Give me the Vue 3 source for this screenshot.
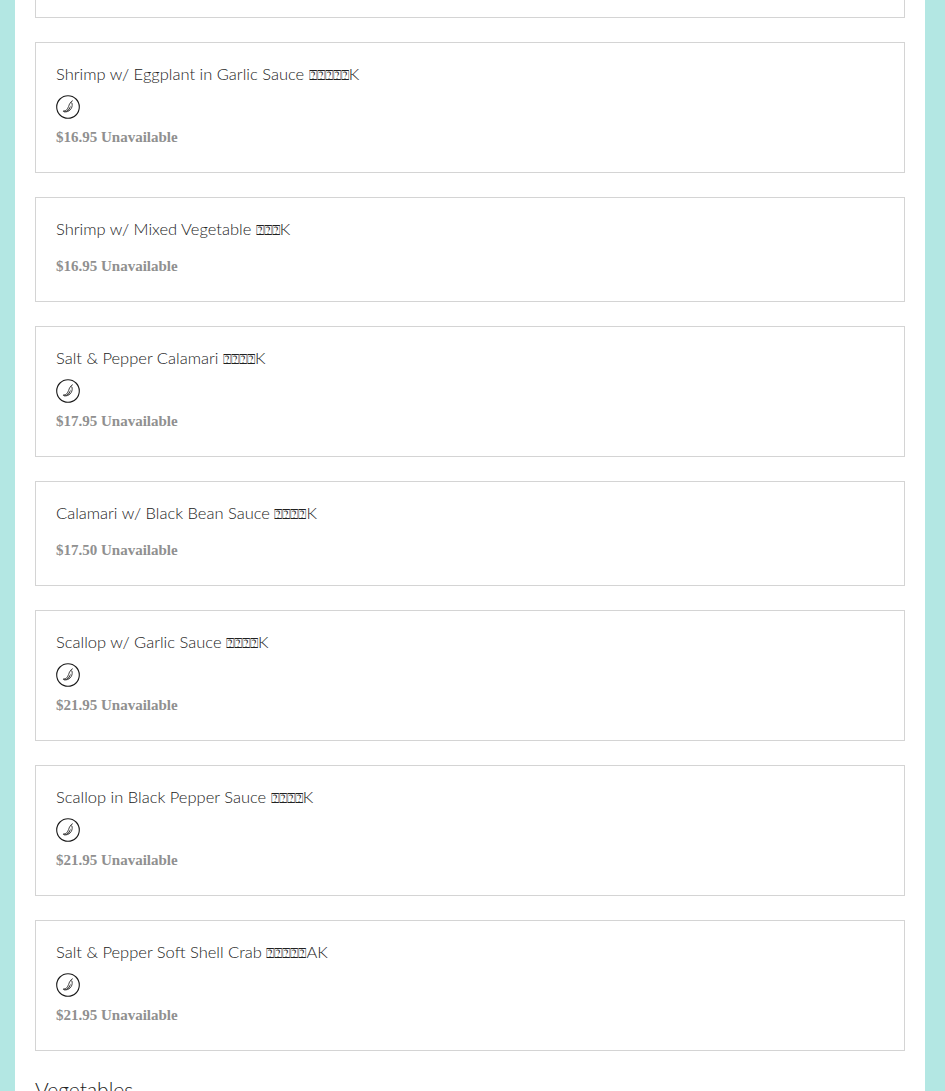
<template>
  <div class="page">
    <main class="column">
      <div class="dish dish-cut"></div>
      <div v-for="dish in dishes" :key="dish.name" class="dish">
        <h3 class="dish-name">{{ dish.name }} <span class="tofu">{{ dish.tofu }}</span>{{ dish.code }}</h3>
        <div v-if="dish.spicy" class="spicy">
          <svg width="24" height="24" viewBox="0 0 24 24">
            <circle cx="12" cy="12" r="11.3" fill="none" stroke="#1a1a1a" stroke-width="1.1" />
            <path d="M14.800 7.600c.2-.8.7-1.400 1.500-1.700" fill="none" stroke="#1a1a1a" stroke-width="1" stroke-linecap="round" />
            <path d="M13.700 8.500c.7-.9 1.900-.9 2.400 0 .4 2.400-.3 4.800-1.900 6.400-1.600 1.600-3.700 2.200-6.200 2-.6-.2-.8-.7-.5-1.100 1.700.1 3-.5 3.900-1.700 1.200-1.600 1.300-3.700 2.300-5.600z" fill="none" stroke="#1a1a1a" stroke-width=".8" />
            <path d="M7.800 16.300c1.900 0 3.500-.6 4.600-1.900 1-1.200 1.500-2.600 2-4 .3 1.900-.4 3.600-1.600 4.800-1.300 1.200-2.900 1.600-4.700 1.500-.5-.1-.5-.3-.3-.4z" fill="#1a1a1a" />
          </svg>
        </div>
        <p class="price">{{ dish.price }} Unavailable</p>
      </div>
      <h2 class="section-title">Vegetables</h2>
    </main>
  </div>
</template>

<script setup>
const q = (n) => '\u2370'.repeat(n)

const dishes = [
  { name: 'Shrimp w/ Eggplant in Garlic Sauce', tofu: q(5), code: 'K', spicy: true, price: '$16.95' },
  { name: 'Shrimp w/ Mixed Vegetable', tofu: q(3), code: 'K', spicy: false, price: '$16.95' },
  { name: 'Salt & Pepper Calamari', tofu: q(4), code: 'K', spicy: true, price: '$17.95' },
  { name: 'Calamari w/ Black Bean Sauce', tofu: q(4), code: 'K', spicy: false, price: '$17.50' },
  { name: 'Scallop w/ Garlic Sauce', tofu: q(4), code: 'K', spicy: true, price: '$21.95' },
  { name: 'Scallop in Black Pepper Sauce', tofu: q(4), code: 'K', spicy: true, price: '$21.95' },
  { name: 'Salt & Pepper Soft Shell Crab', tofu: q(5), code: 'AK', spicy: true, price: '$21.95' }
]
</script>

<style>
html,
body {
  margin: 0;
  overflow: hidden;
}
</style>

<style scoped>
.page {
  height: 1091px;
  overflow: hidden;
  background: #b3e7e3;
  padding: 0 20px 0 15px;
}

.column {
  height: 100%;
  overflow: hidden;
  background: #fff;
  padding: 0 20px;
  font-family: Lato, "Noto Sans", sans-serif;
}

.dish {
  border: 1px solid #d4d4d4;
  padding: 20px 20px 25px;
  margin-bottom: 24px;
}

.dish-cut {
  height: 131px;
  box-sizing: border-box;
  margin-top: -113px;
}

.dish-name {
  margin: 0 0 10px;
  font-size: 16.5px;
  font-weight: 300;
  line-height: 22px;
  color: #222;
}

.tofu {
  font-family: "DejaVu Sans", sans-serif;
  font-size: 13.5px;
  line-height: 0;
}

.spicy {
  height: 24px;
  margin-bottom: 2px;
}

.spicy svg {
  display: block;
}

.price {
  margin: 16px 0 0;
  font-family: "Liberation Serif", serif;
  font-size: 15px;
  font-weight: 700;
  line-height: 20px;
  color: #909090;
}

.spicy + .price {
  margin-top: 8px;
}

.section-title {
  margin: 26px 0 0;
  font-size: 21px;
  font-weight: 300;
  line-height: 26px;
  color: #222;
}
</style>
